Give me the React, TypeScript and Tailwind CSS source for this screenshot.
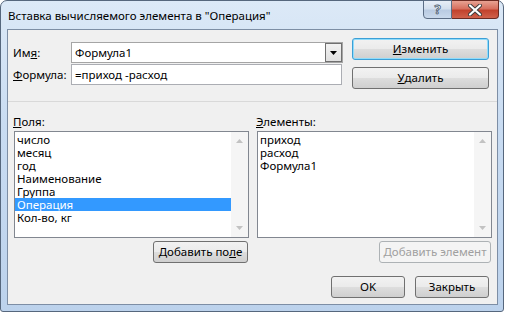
import React from "react";

const font = { fontFamily: '"Noto Sans", "Open Sans", sans-serif' };

function WinButton({
  children,
  className = "",
  focused = false,
  disabled = false,
}: {
  children: React.ReactNode;
  className?: string;
  focused?: boolean;
  disabled?: boolean;
}) {
  let look =
    "border-[#707070] bg-[linear-gradient(#f2f2f2_0%,#ebebeb_48%,#dddddd_52%,#cfcfcf_100%)] text-black";
  if (focused)
    look =
      "border-[#3c9fd6] shadow-[inset_0_0_0_1px_#8fdcfb] bg-[linear-gradient(#f2f2f2_0%,#ebebeb_48%,#dddddd_52%,#cfcfcf_100%)] text-black";
  if (disabled) look = "border-[#adb2b5] bg-[#f4f4f4] text-[#a0a0a0]";
  return (
    <div
      className={`flex h-[22px] items-center justify-center rounded-[3px] border text-[11.5px] leading-none ${look} ${className}`}
    >
      {children}
    </div>
  );
}

function ListBox({
  items,
  selected = -1,
}: {
  items: string[];
  selected?: number;
}) {
  return (
    <div className="flex h-[107px] w-[235px] border border-[#828790] bg-white">
      <div className="flex flex-1 flex-col pt-[1px]">
        {items.map((it, i) => (
          <div
            key={it}
            className={`h-[13px] pl-[2px] text-[11.5px] leading-[13px] ${
              i === selected ? "bg-[#3399ff] text-white" : "text-black"
            }`}
          >
            {it}
          </div>
        ))}
      </div>
      <div className="flex w-[17px] flex-col items-center justify-between bg-[#f5f5f5] py-[7px]">
        <svg width="7" height="4" viewBox="0 0 7 4">
          <path d="M0 4 L3.5 0 L7 4 Z" fill="#c2c2c2" />
        </svg>
        <svg width="7" height="4" viewBox="0 0 7 4">
          <path d="M0 0 L7 0 L3.5 4 Z" fill="#c2c2c2" />
        </svg>
      </div>
    </div>
  );
}

export default function App() {
  return (
    <div className="h-[313px] w-[505px] bg-white" style={font}>
      <div className="flex h-[312px] w-[504px] flex-col rounded-t-[7px] rounded-b-[3px] border border-[#56677d] bg-[linear-gradient(180deg,#dce9f7_0%,#c9dcf2_40%,#bcd2ec_100%)] pl-[6px] pr-[5px] pb-[6px]">
        {/* title bar */}
        <div className="flex h-[28px] items-start">
          <div className="pt-[6px] pl-[1px] text-[11.5px] text-black">
            Вставка вычисляемого элемента в "Операция"
          </div>
          <div className="ml-auto mr-[-1px] mt-[-1px] flex h-[19px]">
            <div className="flex w-[29px] items-center justify-center rounded-bl-[4px] border border-[#5b6d85] bg-[linear-gradient(#e7eef7_0%,#d3dfee_45%,#b9cbe2_55%,#c9d9ec_100%)]">
              <span
                className="text-[13px] font-bold leading-none text-white"
                style={{ WebkitTextStroke: "0.8px #4a5a6e" }}
              >
                ?
              </span>
            </div>
            <div className="flex w-[47px] items-center justify-center rounded-br-[4px] border border-l-0 border-[#6b2a22] bg-[linear-gradient(#e8a293_0%,#d7705f_45%,#c2422d_55%,#d0614b_100%)]">
              <svg width="14" height="12" viewBox="0 0 14 12">
                <path
                  d="M2 1.5 L12 10.5 M12 1.5 L2 10.5"
                  stroke="#3b3b3b"
                  strokeWidth="4"
                  strokeLinecap="round"
                />
                <path
                  d="M2 1.5 L12 10.5 M12 1.5 L2 10.5"
                  stroke="#ffffff"
                  strokeWidth="2.2"
                  strokeLinecap="round"
                />
              </svg>
            </div>
          </div>
        </div>

        {/* client area */}
        <div className="flex h-[276px] flex-col border border-[#7d8ea5] bg-[#f0f0f0] text-[11.5px] text-black">
          {/* top section */}
          <div className="flex h-[71px] items-start">
            <div className="flex flex-col gap-[1px] pt-[12px] pl-[5px]">
              <div className="flex h-[21px] items-center">
                <div className="w-[58px]">
                  Им<span className="underline">я</span>:
                </div>
                <div className="flex h-[21px] w-[272px] items-center border border-[#a5a5a5] bg-white pl-[3px]">
                  <span className="flex-1">Формула1</span>
                  <div className="flex h-[19px] w-[17px] items-center justify-center border border-[#707070] bg-[linear-gradient(#f2f2f2,#e0e0e0)]">
                    <svg width="7" height="4" viewBox="0 0 7 4">
                      <path d="M0 0 L7 0 L3.5 4 Z" fill="#000" />
                    </svg>
                  </div>
                </div>
              </div>
              <div className="flex h-[21px] items-center">
                <div className="w-[58px]">
                  <span className="underline">Ф</span>ормула:
                </div>
                <div className="flex h-[21px] w-[271px] items-center border border-[#abadb3] bg-white pl-[3px]">
                  =приход -расход
                </div>
              </div>
            </div>
            <div className="ml-[9px] flex flex-col gap-[7px] pt-[8px]">
              <WinButton focused className="w-[137px]">
                <span className="underline">И</span>зменить
              </WinButton>
              <WinButton className="w-[137px]">
                <span className="underline">У</span>далить
              </WinButton>
            </div>
          </div>

          <div className="h-[1px] bg-[#d9d9d9]" />

          {/* lists */}
          <div className="flex gap-[8px] pl-[6px] pt-[12px]">
            <div className="flex flex-col items-end">
              <div className="ml-[-1px] h-[16px] self-start leading-[16px]">
                <span className="underline">П</span>оля:
              </div>
              <div className="mt-[1px]">
                <ListBox
                  items={[
                    "число",
                    "месяц",
                    "год",
                    "Наименование",
                    "Группа",
                    "Операция",
                    "Кол-во, кг",
                  ]}
                  selected={5}
                />
              </div>
              <WinButton className="mt-[3px] mr-[1px] w-[95px]">
                Добавить по<span className="underline">л</span>е
              </WinButton>
            </div>
            <div className="flex flex-col items-end">
              <div className="ml-[-1px] h-[16px] self-start leading-[16px]">
                <span className="underline">Э</span>лементы:
              </div>
              <div className="mt-[1px]">
                <ListBox items={["приход", "расход", "Формула1"]} />
              </div>
              <WinButton disabled className="mt-[3px] mr-[1px] w-[112px]">
                Добавить элемент
              </WinButton>
            </div>
          </div>

          {/* OK / close */}
          <div className="flex justify-end gap-[10px] pr-[8px] pt-[13px]">
            <WinButton className="w-[74px]">OK</WinButton>
            <WinButton className="w-[74px]">Закрыть</WinButton>
          </div>
        </div>
      </div>
    </div>
  );
}
